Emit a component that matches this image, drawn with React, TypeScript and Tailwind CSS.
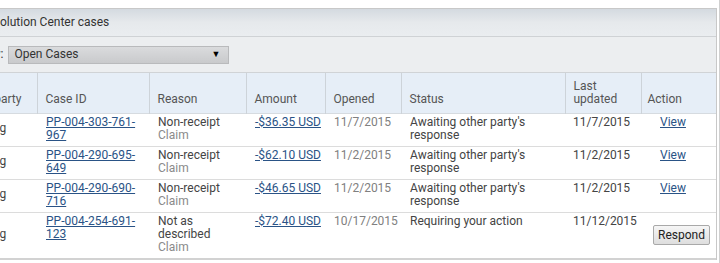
const rows = [
  { party: 'jyshang', id: 'PP-004-303-761-967', reason: 'Non-receipt', amount: '-$36.35 USD', opened: '11/7/2015', status: "Awaiting other party's response", updated: '11/7/2015', action: 'view' },
  { party: 'jyshang', id: 'PP-004-290-695-649', reason: 'Non-receipt', amount: '-$62.10 USD', opened: '11/2/2015', status: "Awaiting other party's response", updated: '11/2/2015', action: 'view' },
  { party: 'jyshang', id: 'PP-004-290-690-716', reason: 'Non-receipt', amount: '-$46.65 USD', opened: '11/2/2015', status: "Awaiting other party's response", updated: '11/2/2015', action: 'view' },
  { party: 'jyshang', id: 'PP-004-254-691-123', reason: 'Not as described', amount: '-$72.40 USD', opened: '10/17/2015', status: 'Requiring your action', updated: '11/12/2015', action: 'respond' },
];

const th = 'align-bottom text-left font-normal pl-[8px] pb-[7px] border-r border-[#cdd3d9]';
const td = 'align-top pl-[9px] pr-[2px] pt-[2px] pb-[4px]';

export default function App() {
  return (
    <div className="w-[720px] h-[263px] overflow-hidden bg-white border-r border-[#d0d0d0] font-['Roboto',sans-serif] text-[12px] leading-[13px] text-[#444]">
      <div className="ml-[-46px] mt-[8px] w-[763px] border-t border-r border-[#c8c8c8]">
        {/* Title bar */}
        <div className="h-[28px] flex items-center pl-[26px] bg-gradient-to-b from-[#d4dae0] via-[#e6e9ec] to-[#eaedf0] border-b border-[#cfd2d5] text-[#333]">
          Resolution Center cases
        </div>

        {/* Filter */}
        <div className="h-[36px] flex items-center gap-[4px] pl-[17px] bg-[#eceef0] border-b border-[#d0d3d6] text-[#333]">
          <span>Show:</span>
          <div className="w-[221px] h-[18px] flex items-center justify-between pl-[6px] pr-[7px] bg-gradient-to-b from-[#dadbdd] to-[#c9cacc] border border-[#b9babc]">
            <span>Open Cases</span>
            <span className="text-[9px] text-black">▼</span>
          </div>
        </div>

        {/* Table */}
        <table className="table-fixed border-collapse w-[762px]">
          <colgroup>
            <col className="w-[83px]" />
            <col className="w-[112px]" />
            <col className="w-[97px]" />
            <col className="w-[79px]" />
            <col className="w-[76px]" />
            <col className="w-[164px]" />
            <col className="w-[76px]" />
            <col className="w-[75px]" />
          </colgroup>
          <thead>
            <tr className="h-[40px] bg-[#e6eef7] text-[#555] border-b border-[#d6dbe0]">
              <th className={th}>Other party</th>
              <th className={th}>Case ID</th>
              <th className={th}>Reason</th>
              <th className={th}>Amount</th>
              <th className={th}>Opened</th>
              <th className={th}>Status</th>
              <th className={th}>Last updated</th>
              <th className="align-bottom text-left font-normal pl-[6px] pb-[7px]">Action</th>
            </tr>
          </thead>
          <tbody>
            {rows.map((r, i) => (
              <tr key={i} className={i === rows.length - 1 ? 'border-b-2 border-[#d2d2d2]' : 'border-b border-[#dcdcdc]'}>
                <td className="align-middle pl-[11px] pr-[2px] pt-[2px] pb-[4px]">{r.party}</td>
                <td className={td}>
                  <a href="#" className="underline text-[#2a5386]">{r.id}</a>
                </td>
                <td className={td}>
                  <div className="pr-[8px]">{r.reason}</div>
                  <div className="text-[#8a8a8a]">Claim</div>
                </td>
                <td className={td}>
                  <a href="#" className="underline text-[#2a5386] whitespace-nowrap">{r.amount}</a>
                </td>
                <td className={td + ' text-[#808080]'}>{r.opened}</td>
                <td className={td}>{r.status}</td>
                <td className="align-top pl-[8px] pt-[2px] pb-[4px]">{r.updated}</td>
                {r.action === 'view' ? (
                  <td className="align-top pl-[19px] pt-[2px] pb-[4px]">
                    <a href="#" className="underline text-[#2a5386]">View</a>
                  </td>
                ) : (
                  <td className="align-middle text-right pr-[6px]">
                    <button className="h-[20px] px-[4px] pt-[1px] bg-gradient-to-b from-[#f6f6f6] to-[#dedede] border border-[#a9a9a9] rounded-[2px] text-[#222]">
                      Respond
                    </button>
                  </td>
                )}
              </tr>
            ))}
          </tbody>
        </table>
      </div>
    </div>
  );
}
